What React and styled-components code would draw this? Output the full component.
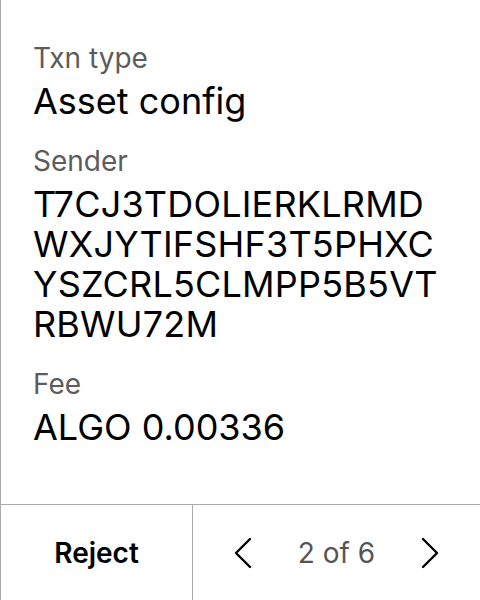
import React from 'react'
import styled, { createGlobalStyle } from 'styled-components'

const Global = createGlobalStyle`
  html, body {
    margin: 0;
    padding: 0;
    background: #fff;
  }
  body {
    font-family: Inter, "Noto Sans", sans-serif;
    color: #000;
  }
`

const Screen = styled.div`
  width: 480px;
  height: 600px;
  box-sizing: border-box;
  border-left: 1px solid #aaa;
  display: flex;
  flex-direction: column;
`

const Body = styled.div`
  flex: 1;
  padding: 40px 32px 0;
  display: flex;
  flex-direction: column;
`

const Field = styled.div`
  margin-bottom: 22px;
`

const Label = styled.div`
  font-size: 28px;
  line-height: 36px;
  color: #5c5c5c;
  margin-bottom: 5px;
`

const Value = styled.div`
  font-size: 36px;
  line-height: 40px;
  color: #000;
`

const Line = styled.div`
  white-space: nowrap;
  letter-spacing: 0.2px;
`

const Footer = styled.div`
  height: 95px;
  border-top: 1px solid #aaa;
  display: flex;
`

const RejectButton = styled.button`
  width: 192px;
  border: none;
  border-right: 1px solid #aaa;
  background: none;
  font-family: inherit;
  font-size: 28px;
  font-weight: 600;
  color: #000;
  padding: 0;
`

const Pager = styled.div`
  flex: 1;
  display: flex;
  align-items: center;
  justify-content: space-between;
  padding: 0 38px 0 38px;
`

const Arrow = styled.button`
  border: none;
  background: none;
  padding: 0;
  width: 24px;
  height: 34px;
  display: flex;
  align-items: center;
  justify-content: center;
`

const Count = styled.span`
  font-size: 28px;
  color: #555;
`

const Chevron = ({ dir }) => (
  <svg width="20" height="32" viewBox="0 0 20 32" fill="none">
    <path
      d={dir === 'left' ? 'M17 2 L3 16 L17 30' : 'M3 2 L17 16 L3 30'}
      stroke="#000"
      strokeWidth="2.4"
      strokeLinecap="round"
      strokeLinejoin="round"
    />
  </svg>
)

const sender = 'T7CJ3TDOLIERKLRMDWXJYTIFSHF3T5PHXCYSZCRL5CLMPP5B5VTRBWU72M'
const chunk = (str, n) => str.match(new RegExp(`.{1,${n}}`, 'g'))

export default function App() {
  return (
    <>
      <Global />
      <Screen>
        <Body>
          <Field>
            <Label>Txn type</Label>
            <Value>Asset config</Value>
          </Field>
          <Field>
            <Label>Sender</Label>
            <Value>
              {chunk(sender, 17).map(part => (
                <Line key={part}>{part}</Line>
              ))}
            </Value>
          </Field>
          <Field>
            <Label>Fee</Label>
            <Value>ALGO 0.00336</Value>
          </Field>
        </Body>
        <Footer>
          <RejectButton>Reject</RejectButton>
          <Pager>
            <Arrow aria-label="Previous"><Chevron dir="left" /></Arrow>
            <Count>2 of 6</Count>
            <Arrow aria-label="Next"><Chevron dir="right" /></Arrow>
          </Pager>
        </Footer>
      </Screen>
    </>
  )
}
